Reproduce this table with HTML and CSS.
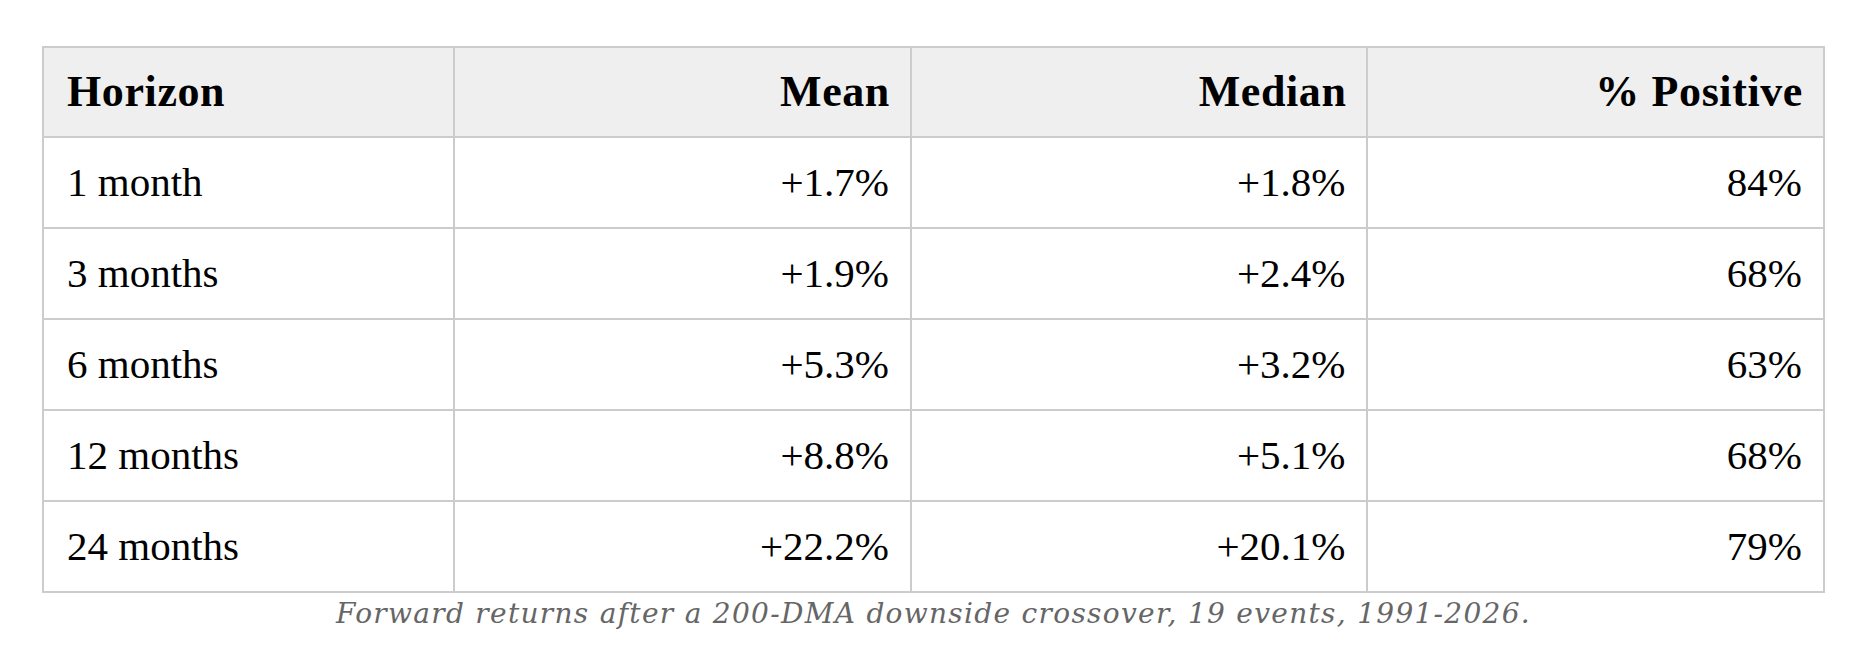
FILE: index.html
```html
<!DOCTYPE html>
<html>
<head>
<meta charset="utf-8">
<link rel="stylesheet" href="styles.css">
</head>
<body>
<div class="wrap">
<table class="stats">
<colgroup>
<col class="c-first"><col class="c-num"><col class="c-num"><col class="c-num">
</colgroup>
<thead>
<tr><th class="l">Horizon</th><th>Mean</th><th>Median</th><th>% Positive</th></tr>
</thead>
<tbody>
<tr><td class="l">1 month</td><td>+1.7%</td><td>+1.8%</td><td>84%</td></tr>
<tr><td class="l">3 months</td><td>+1.9%</td><td>+2.4%</td><td>68%</td></tr>
<tr><td class="l">6 months</td><td>+5.3%</td><td>+3.2%</td><td>63%</td></tr>
<tr><td class="l">12 months</td><td>+8.8%</td><td>+5.1%</td><td>68%</td></tr>
<tr><td class="l">24 months</td><td>+22.2%</td><td>+20.1%</td><td>79%</td></tr>
</tbody>
</table>
<p class="caption">Forward returns after a 200-DMA downside crossover, 19 events, 1991-2026.</p>
</div>
</body>
</html>
```
FILE: styles.css
```css
html, body {
  margin: 0;
  padding: 0;
  background: #fff;
}
.wrap {
  padding: 46px 39px 0 42px;
  font-family: "Liberation Serif", "DejaVu Serif", serif;
  color: #000;
}
.stats {
  width: 100%;
  border-collapse: collapse;
  table-layout: fixed;
  font-size: 41px;
  line-height: 60px;
}
.c-first { width: 23.1%; }
.stats th, .stats td {
  border: 2px solid #ccc;
  padding: 14px 21px 15px 23px;
  text-align: right;
}
.stats th {
  background: #efefef;
  font-weight: bold;
  font-size: 44px;
  letter-spacing: 0.6px;
  padding-top: 14px;
  padding-bottom: 14px;
  padding-right: 20px;
}
.stats .l { text-align: left; }
.caption {
  margin: 0;
  text-align: center;
  font-family: "DejaVu Serif", serif;
  font-style: italic;
  font-size: 28px;
  letter-spacing: 1.3px;
  line-height: 42px;
  color: #666;
}
```
